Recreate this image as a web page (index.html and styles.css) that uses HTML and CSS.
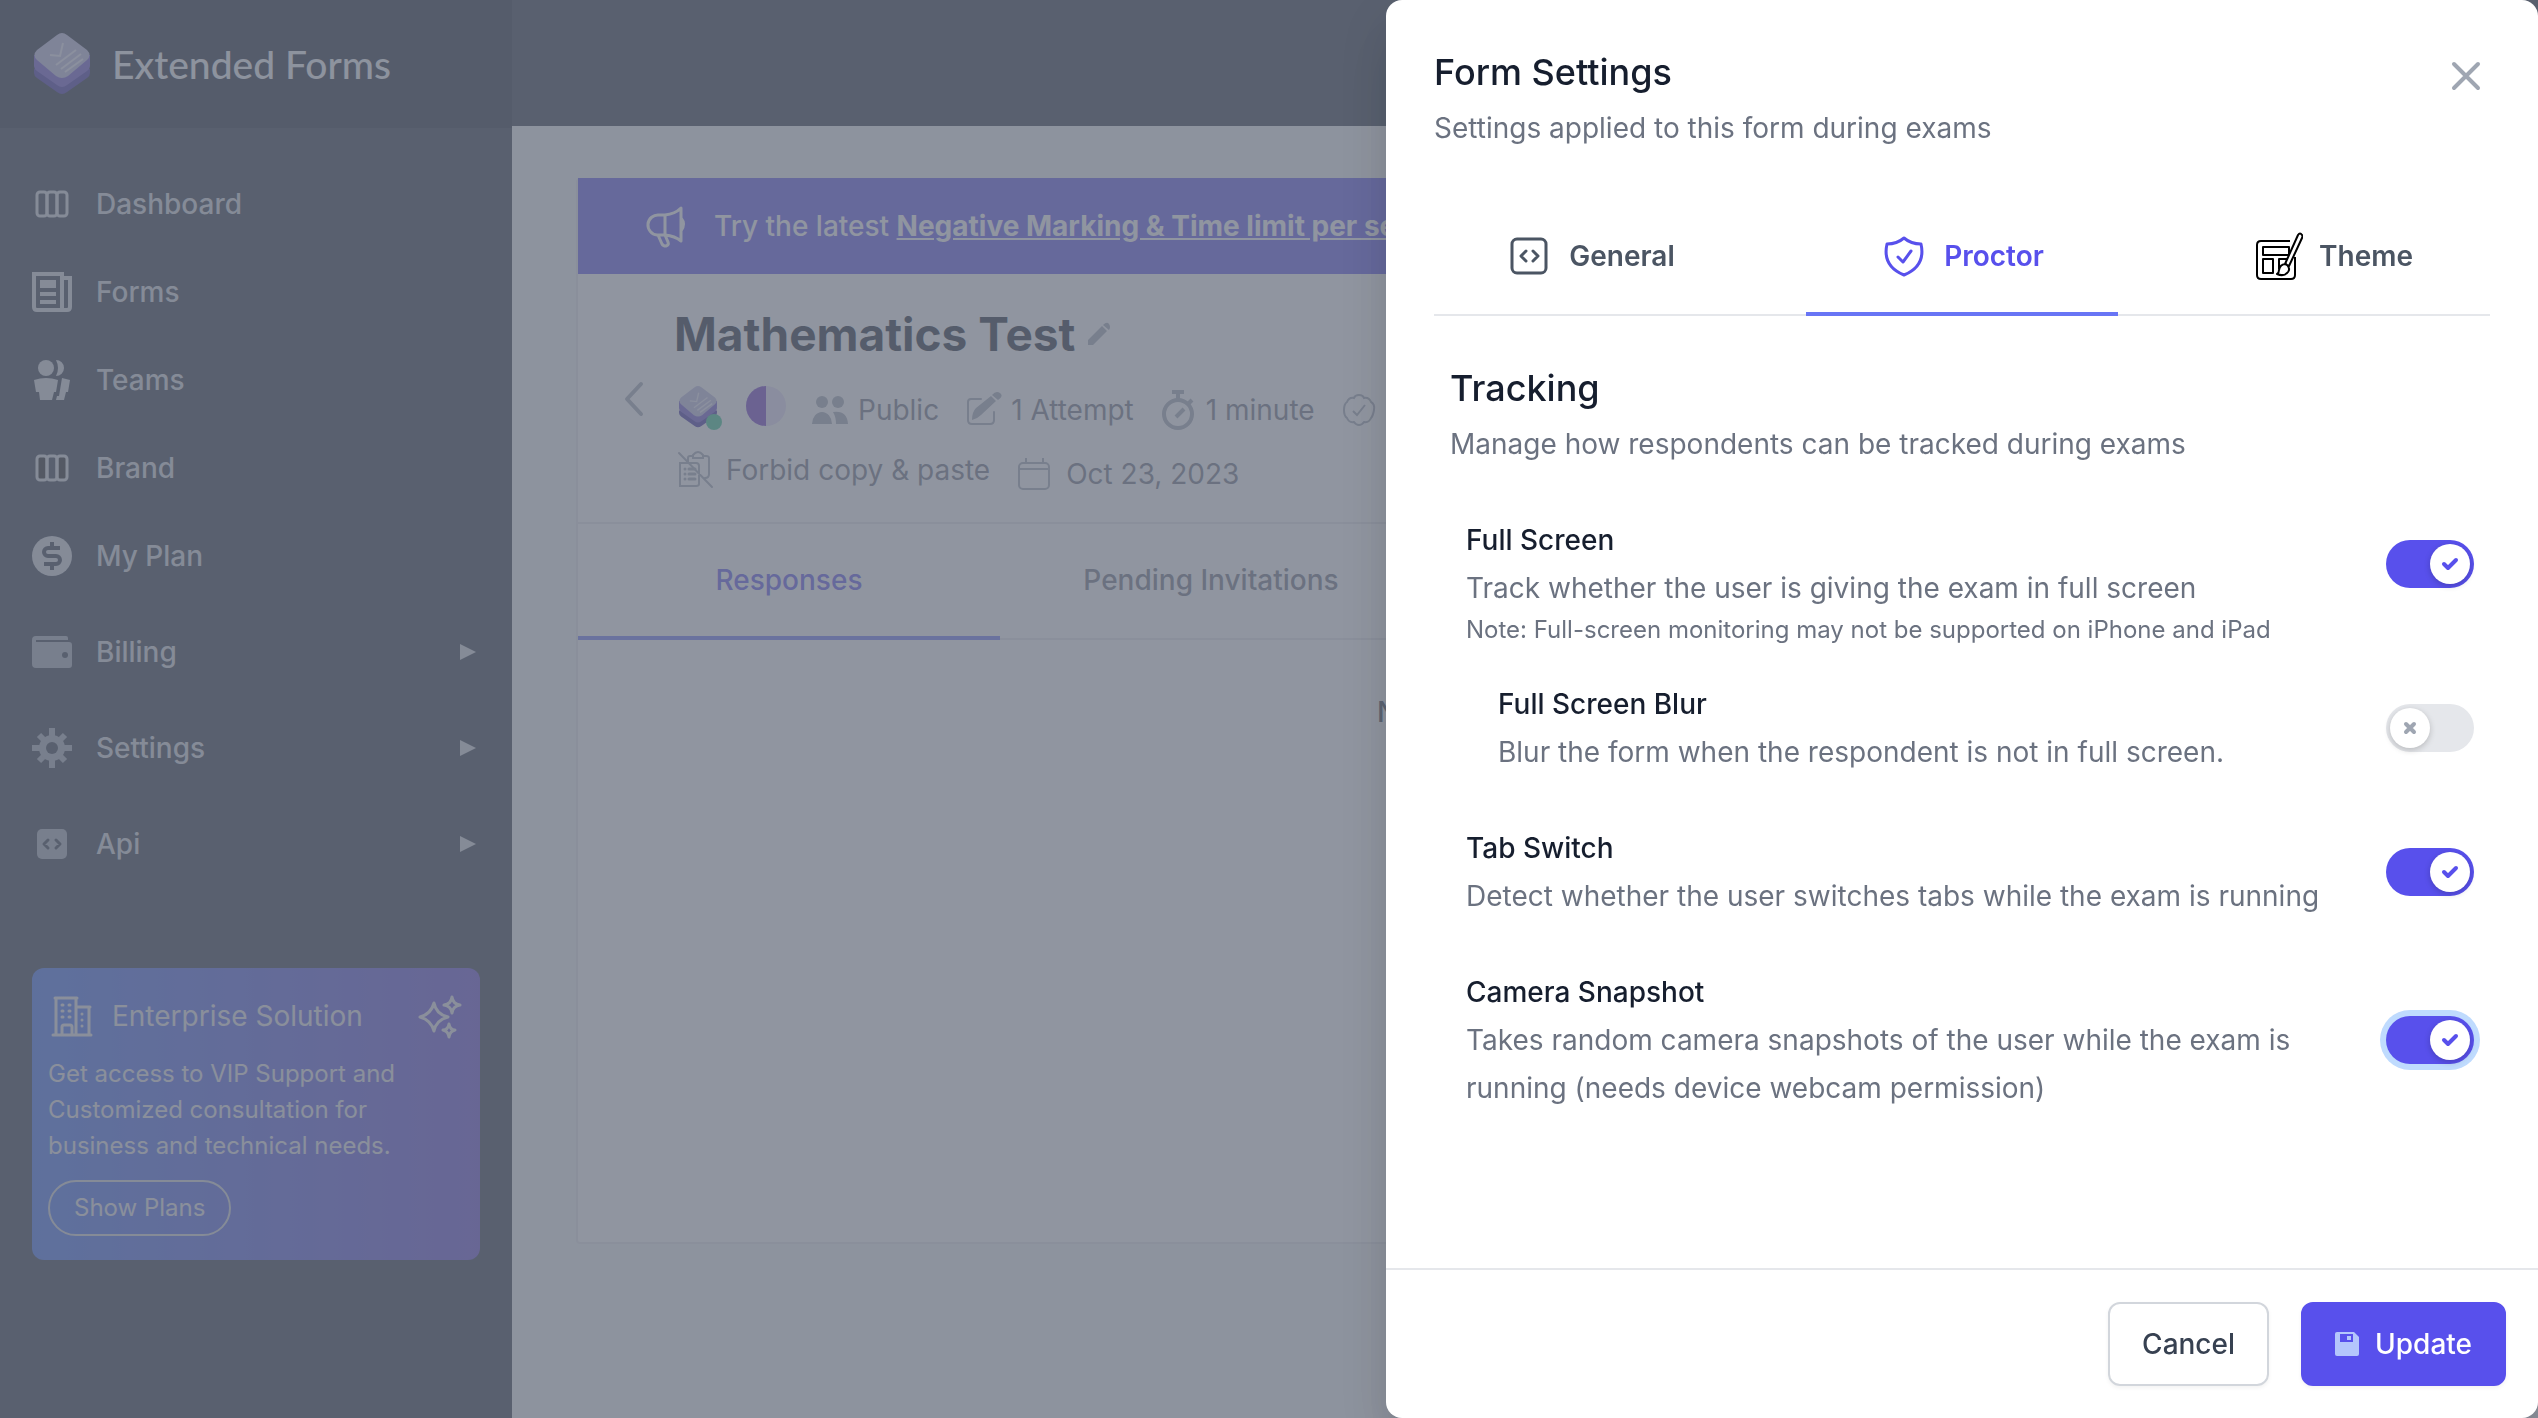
FILE: index.html
```html
<!DOCTYPE html>
<html lang="en">
<head>
<meta charset="utf-8">
<meta name="viewport" content="width=device-width, initial-scale=1">
<title>Extended Forms</title>
<link rel="stylesheet" href="styles.css">
</head>
<body>
<svg class="sprite" aria-hidden="true">
  <symbol id="logo" viewBox="0 0 56 62">
    <path fill="#3a28a0" d="M0 36v4q0 3 3 5l20 14q5 4 10 0l20-14q3-2 3-5v-4z"/>
    <path fill="#6852cc" d="M0 22v11q0 3 3 5l20 14q5 4 10 0l20-14q3-2 3-5V22z"/>
    <path fill="#bcbae0" d="M3 17 23 2q5-4 10 0l20 15q5 5 0 10L34 43q-6 4-12 0L3 27q-5-5 0-10z"/>
    <path fill="none" stroke="#e9e9f6" stroke-width="2" d="M16 22l10 1 3-13M22 32l20-15M27 36l20-15M31 39l18-13"/>
  </symbol>
  <symbol id="columns" viewBox="0 0 40 40">
    <rect x="5" y="8" width="10" height="24" rx="3"/><rect x="15" y="8" width="10" height="24" rx="3"/><rect x="25" y="8" width="10" height="24" rx="3"/>
  </symbol>
</svg>

<div class="app">
  <aside class="sidebar">
    <div class="brand">
      <svg class="brand-logo" aria-hidden="true"><use href="#logo"/></svg>
      <span class="brand-name">Extended Forms</span>
    </div>
    <nav>
      <ul class="nav">
        <li><a href="#" class="nav-link">
          <svg class="nav-icon line" viewBox="0 0 40 40"><use href="#columns"/></svg>Dashboard</a></li>
        <li><a href="#" class="nav-link">
          <svg class="nav-icon" viewBox="0 0 40 40"><path fill="none" stroke="currentColor" stroke-width="4" d="M2 2h28v36H5q-3 0-3-3zM30 6h8v29q0 3-3 3h-6"/><path fill="currentColor" d="M8 8h16v8H8zM8 20h16v4H8zM8 28h16v4H8z"/></svg>Forms</a></li>
        <li><a href="#" class="nav-link">
          <svg class="nav-icon" viewBox="0 0 40 40" fill="currentColor"><circle cx="14" cy="8" r="8"/><path d="M24 0a8 8 0 1 1 0 16q4-8 0-16zM2 20q12-4 24 0l-2 12h-2l-2 8H8l-1-8H4zM30 18l8 2-2 12h-2l-2 8h-8l1-4h2z"/></svg>Teams</a></li>
        <li><a href="#" class="nav-link">
          <svg class="nav-icon line" viewBox="0 0 40 40"><path fill="#111" stroke="none" d="M6 9h8v22H6zM26 9h8v22h-8z"/><use href="#columns"/></svg>Brand</a></li>
        <li><a href="#" class="nav-link">
          <svg class="nav-icon" viewBox="0 0 40 40"><circle cx="20" cy="20" r="20" fill="currentColor"/><path fill="none" stroke="#252f3f" stroke-width="4" d="M28 12H16a4 4 0 0 0 0 8h8a4 4 0 0 1 0 8H12M20 6v6M20 28v6"/></svg>My Plan</a></li>
      </ul>
      <ul class="nav groups">
        <li><button type="button" class="nav-link group">
          <svg class="nav-icon muted" viewBox="0 0 40 40"><path fill="currentColor" d="M4 4h30q2 0 2 2v2H4v2h33q3 0 3 3v20q0 3-3 3H4q-4 0-4-4V8q0-4 4-4z"/><circle cx="33" cy="23" r="3" fill="#252f3f"/></svg>Billing
          <svg class="caret" viewBox="0 0 16 16"><path fill="currentColor" d="M0 0l16 8-16 8z"/></svg></button></li>
        <li><button type="button" class="nav-link group">
          <svg class="nav-icon muted" viewBox="0 0 40 40"><path fill="none" stroke="currentColor" stroke-width="6" stroke-linejoin="round" d="M20 0v40M0 20h40M7 7l26 26M33 7 7 33"/><circle cx="20" cy="20" r="13" fill="currentColor"/><circle cx="20" cy="20" r="6" fill="#252f3f"/></svg>Settings
          <svg class="caret" viewBox="0 0 16 16"><path fill="currentColor" d="M0 0l16 8-16 8z"/></svg></button></li>
        <li><button type="button" class="nav-link group">
          <svg class="nav-icon muted" viewBox="0 0 40 40"><rect x="5" y="5" width="30" height="30" rx="5" fill="currentColor"/><path fill="none" stroke="#252f3f" stroke-width="3" stroke-linecap="round" stroke-linejoin="round" d="M16 16l-4 4 4 4M24 16l4 4-4 4"/></svg>Api
          <svg class="caret" viewBox="0 0 16 16"><path fill="currentColor" d="M0 0l16 8-16 8z"/></svg></button></li>
      </ul>
    </nav>
    <section class="promo">
      <div class="promo-head">
        <svg class="promo-icon" viewBox="0 0 48 48" fill="none" stroke="currentColor" stroke-width="3" stroke-linecap="round"><path d="M5 43h38M7 6h22M8 6v37M28 6v37M29 15h13M41 16v27M14 43v-8q0-2 2-2h6q2 0 2 2v8"/><path stroke-width="3" d="M14 13h1M21 13h1M14 19h1M21 19h1M14 25h1M21 25h1M34 22v0M34 28v0M34 34v0"/></svg>
        <h2>Enterprise Solution</h2>
        <svg class="promo-spark" viewBox="0 0 48 48" fill="none" stroke="currentColor" stroke-width="3" stroke-linejoin="round"><path d="M18 11q2 11 14 14-12 3-14 14-3-11-14-14 11-3 14-14zM36 5q1 7 8 8-7 1-8 8-1-7-8-8 7-1 8-8zM33 32q1 6 6 6-5 1-6 7-1-6-6-7 5 0 6-6z"/></svg>
      </div>
      <p>Get access to VIP Support and Customized consultation for business and technical needs.</p>
      <button type="button" class="promo-btn">Show Plans</button>
    </section>
  </aside>

  <div class="page">
    <header class="topbar"></header>
    <main class="main">
      <section class="card">
        <div class="banner">
          <svg class="banner-icon" viewBox="0 0 44 44" fill="none" stroke="currentColor" stroke-width="3" stroke-linejoin="round" stroke-linecap="round"><path d="M19 11h-6a10 10 0 0 0-2 20h8q10 1 16 6V4q-6 6-16 7v20M35 14q5 6 0 13M12 31l4 9q1 2 4 2 3-1 2-4l-3-7"/></svg>
          <p>Try the latest <a href="#">Negative Marking &amp; Time limit per section</a></p>
        </div>
        <div class="form-head">
          <a href="#" class="back" aria-label="Back"><svg viewBox="0 0 24 40" fill="none" stroke="currentColor" stroke-width="4" stroke-linecap="round" stroke-linejoin="round"><path d="M19 4 5 19l14 15"/></svg></a>
          <div class="form-info">
            <h1>Mathematics Test <svg class="pencil" viewBox="0 0 24 24" fill="currentColor"><path d="M1 23v-5L15 4l5 5L6 23zM16 3q4-4 6-1t0 6z"/></svg></h1>
            <div class="meta">
              <span class="avatar"><svg viewBox="0 0 56 62" aria-hidden="true"><use href="#logo"/></svg></span>
              <svg class="half" viewBox="0 0 40 40"><circle cx="20" cy="20" r="20" fill="#e6defa"/><path fill="#6c36c4" d="M20 0a20 20 0 0 0 0 40z"/></svg>
              <span class="meta-item"><svg class="meta-icon" viewBox="0 0 40 40" fill="currentColor"><circle cx="12" cy="12" r="6"/><circle cx="28" cy="12" r="6"/><path d="M2 34a10 12 0 0 1 20 0zM23 22q14-2 15 12H26q0-7-3-12z"/></svg>Public</span>
              <span class="meta-item"><svg class="meta-icon" viewBox="0 0 40 40"><path fill="none" stroke="currentColor" stroke-width="2" stroke-linecap="round" d="M18 9H8q-3 0-3 3v18q0 4 4 4h18q4 0 4-4v-8"/><path fill="currentColor" d="M9 30q0-8 4-12L28 6l5 5-15 14q-4 4-9 5zM29 5q4-5 8-2t-2 7z"/></svg>1 Attempt</span>
              <span class="meta-item"><svg class="meta-icon" viewBox="0 0 40 40" fill="none" stroke="currentColor" stroke-width="4"><circle cx="20" cy="24" r="14"/><path d="M14 2h12M20 2v8M30 14l4-4M18 27l8-8"/></svg>1 minute</span>
              <span class="meta-item"><svg class="meta-icon" viewBox="0 0 40 40" fill="none" stroke="currentColor" stroke-width="2"><path d="M20 5q4 0 5 3 5-1 7 4 4 2 3 8-1 6-3 8-2 5-7 4-2 3-5 3t-5-3q-5 1-7-4-3-2-3-8t3-8q2-5 7-4 1-3 5-3z"/><path d="M14 21l4 4 8-10"/></svg></span>
            </div>
            <div class="meta second">
              <span class="meta-item short"><svg class="meta-icon" viewBox="0 0 40 40" fill="none" stroke="currentColor" stroke-width="2" stroke-linecap="round"><path d="M6 13h16q3 0 3 3v18q0 2-3 2H6zM14 12V8q0-2 2-2h3M29 6h3q3 0 3 2v16q0 4-4 4M19 5q5-6 10 0v3H19zM5 3l33 34"/><path d="M11 19h0M11 24h0M11 29h0M15 19h6M15 24h6M15 29h6" stroke-width="3"/></svg>Forbid copy &amp; paste</span>
              <span class="meta-item"><svg class="meta-icon" viewBox="0 0 40 40" fill="none" stroke="currentColor" stroke-width="2"><rect x="5" y="9" width="30" height="26" rx="4"/><path d="M5 15h30M12 4v5M29 4v5"/></svg>Oct 23, 2023</span>
            </div>
          </div>
        </div>
        <div class="tabs">
          <a href="#" class="tab active">Responses</a>
          <a href="#" class="tab">Pending Invitations</a>
        </div>
        <p class="empty">No responses received</p>
      </section>
    </main>
  </div>
</div>

<div class="overlay"></div>

<div class="drawer" role="dialog" aria-labelledby="drawer-title">
  <div class="drawer-body">
    <header class="drawer-head">
      <div>
        <h2 id="drawer-title">Form Settings</h2>
        <p>Settings applied to this form during exams</p>
      </div>
      <button type="button" class="close" aria-label="Close"><svg viewBox="0 0 48 48" fill="none" stroke="currentColor" stroke-width="4" stroke-linecap="round"><path d="M12 12l24 24M36 12 12 36"/></svg></button>
    </header>
    <div class="dtabs" role="tablist">
      <button type="button" class="dtab" role="tab"><svg viewBox="0 0 48 48" fill="none" stroke="currentColor" stroke-width="3" stroke-linecap="round" stroke-linejoin="round"><rect x="7" y="7" width="34" height="34" rx="5"/><path d="M21 19l-5 5 5 5M28 19l5 5-5 5"/></svg>General</button>
      <button type="button" class="dtab active" role="tab" aria-selected="true"><svg viewBox="0 0 48 48" fill="none" stroke="currentColor" stroke-width="3" stroke-linecap="round" stroke-linejoin="round"><path d="M24 6q7 6 17 6 5 22-17 31Q2 34 7 12q10 0 17-6z"/><path d="M18 25l5 5 8-11"/></svg>Proctor</button>
      <button type="button" class="dtab" role="tab"><svg viewBox="0 0 48 48" fill="none" stroke="#000" stroke-width="2" stroke-linejoin="round"><path d="M35 9H6q-4 0-4 4v30q0 4 4 4h30q4 0 4-4V25M8 15h26v8H8zM8 27h10v14H8zM32 27h-8v10"/><path fill="#fff" d="M30 32 43 3q2-3 4 0 1 1 0 3L34 34zM22 42q2-1 2-4 1-6 7-6 5 4 2 8-4 5-11 2z"/></svg>Theme</button>
    </div>
    <section class="settings">
      <h3>Tracking</h3>
      <p class="desc">Manage how respondents can be tracked during exams</p>
      <div class="setting">
        <div class="setting-row">
          <label for="full-screen"><strong>Full Screen</strong><span class="desc">Track whether the user is giving the exam in full screen</span></label>
          <input type="checkbox" class="switch" id="full-screen" checked>
        </div>
        <p class="note">Note: Full-screen monitoring may not be supported on iPhone and iPad</p>
        <div class="setting-row nested">
          <label for="blur"><strong>Full Screen Blur</strong><span class="desc">Blur the form when the respondent is not in full screen.</span></label>
          <input type="checkbox" class="switch" id="blur">
        </div>
      </div>
      <div class="setting setting-row">
        <label for="tab-switch"><strong>Tab Switch</strong><span class="desc">Detect whether the user switches tabs while the exam is running</span></label>
        <input type="checkbox" class="switch" id="tab-switch" checked>
      </div>
      <div class="setting setting-row">
        <label for="camera"><strong>Camera Snapshot</strong><span class="desc">Takes random camera snapshots of the user while the exam is running (needs device webcam permission)</span></label>
        <input type="checkbox" class="switch focused" id="camera" checked>
      </div>
    </section>
  </div>
  <footer class="drawer-foot">
    <button type="button" class="btn">Cancel</button>
    <button type="button" class="btn primary"><svg viewBox="0 0 24 24"><path fill="#b4c6fc" d="M2 0h17l5 5v17q0 2-2 2H2q-2 0-2-2V2q0-2 2-2z"/><path fill="#5850ec" d="M5 2h13v8H5z"/><path fill="#b4c6fc" d="M12 4h4v4h-4z"/></svg>Update</button>
  </footer>
</div>
</body>
</html>
```
FILE: styles.css
```css
* { box-sizing: border-box; }

body {
  margin: 0;
  font: 400 28px/48px Inter, "Liberation Sans", sans-serif;
  color: #6b7280;
  background: #f4f5f7;
  overflow: hidden;
}

h1, h2, h3, p, ul { margin: 0; padding: 0; }
ul { list-style: none; }
a { color: inherit; text-decoration: none; }
button { font: inherit; color: inherit; background: none; border: 0; padding: 0; cursor: pointer; }
svg { display: block; flex: none; }
.sprite { position: absolute; width: 0; height: 0; }

.app { display: grid; grid-template-columns: 512px minmax(0, 1fr); min-height: 100vh; }

/* Sidebar */
.sidebar { background: #252f3f; color: #d2d6dc; }
.brand { display: flex; align-items: center; gap: 22px; height: 128px; padding: 0 34px; background: #161e2e; }
.brand-logo { width: 56px; height: 62px; }
.brand-name { font: 500 39px/48px Lato, sans-serif; color: #f4f5f7; }
.nav { padding-top: 32px; }
.nav.groups { padding-top: 4px; }
.nav-link { display: flex; align-items: center; gap: 24px; width: 100%; height: 88px; padding: 0 36px 0 32px; font-weight: 500; text-align: left; }
.nav-link.group { height: 96px; }
.nav-icon { width: 40px; height: 40px; }
.nav-icon.line { fill: none; stroke: currentColor; stroke-width: 3; }
.nav-icon.muted { color: #9fa6b2; }
.caret { width: 16px; height: 16px; margin-left: auto; }

.promo { margin: 76px 32px 0; padding: 24px 16px; border-radius: 12px; background: linear-gradient(90deg, #3b6ef0, #6046d0); color: #e5e7eb; font-size: 24px; line-height: 36px; }
.promo-head { display: flex; align-items: center; gap: 16px; margin-bottom: 16px; }
.promo-head h2 { font-weight: 400; font-size: 28px; line-height: 48px; }
.promo-icon, .promo-spark { width: 48px; height: 48px; }
.promo-spark { margin-left: auto; }
.promo-btn { height: 56px; margin-top: 16px; padding: 0 24px; border: 2px solid #d2d6dc; border-radius: 28px; }

/* Form page */
.topbar { height: 126px; background: #252f3f; }
.main { padding: 52px 64px; }
.card { min-height: 1066px; border: 2px solid #e5e7eb; border-top: 0; border-radius: 4px; background: #fff; }
.banner { display: flex; align-items: center; gap: 24px; height: 96px; padding: 0 68px; background: #5850ec; color: #fff; font-weight: 500; white-space: nowrap; }
.banner-icon { width: 44px; height: 44px; }
.banner a { font-weight: 700; text-decoration: underline; }
.form-head { display: flex; align-items: center; gap: 28px; padding: 28px 44px 24px; border-bottom: 2px solid #e5e7eb; }
.back svg { width: 24px; height: 40px; color: #9fa6b2; }
.form-info h1 { display: flex; align-items: center; gap: 12px; font-size: 46px; line-height: 64px; font-weight: 700; color: #161e2e; }
.pencil { width: 24px; height: 24px; color: #9fa6b2; }
.meta { display: flex; gap: 24px; margin-top: 20px; }
.meta.second { margin-top: 16px; }
.meta-item { display: flex; align-items: center; gap: 8px; height: 48px; }
.meta-item.short { height: 40px; }
.meta.second .meta-item { gap: 12px; }
.meta-icon { width: 40px; height: 40px; color: #9fa6b2; }
.avatar { position: relative; width: 48px; padding: 0 4px; }
.avatar svg { width: 40px; height: 42px; }
.avatar::after { content: ""; position: absolute; right: 0; bottom: 4px; width: 16px; height: 16px; border-radius: 50%; background: #31c48d; }
.half { width: 40px; height: 40px; }

.tabs { display: flex; border-bottom: 2px solid #e5e7eb; }
.tab { flex: 0 0 422px; height: 116px; margin-bottom: -2px; border-bottom: 4px solid transparent; line-height: 112px; text-align: center; font-weight: 500; }
.tab.active { color: #5850ec; border-color: #6875f5; }
.empty { padding: 48px 36px 48px 48px; text-align: center; font-weight: 500; color: #374151; }

.overlay { position: fixed; inset: 0; background: rgba(107, 114, 128, .75); }

/* Settings drawer */
.drawer { position: fixed; top: 0; right: 0; bottom: 0; display: flex; flex-direction: column; width: 1152px; max-width: 100%; border-radius: 16px; background: #fff; box-shadow: 0 40px 50px -10px rgba(0, 0, 0, .1), 0 20px 50px rgba(0, 0, 0, .1); }
.drawer-body { flex: 1; padding: 48px; overflow: auto; }
.drawer-head { display: flex; justify-content: space-between; align-items: flex-start; }
.drawer h2, .drawer h3 { margin-bottom: 8px; font-size: 36px; line-height: 48px; font-weight: 500; color: #161e2e; }
.close { margin-top: 4px; color: #9fa6b2; }
.close svg { width: 48px; height: 48px; }
.dtabs { display: flex; justify-content: space-between; margin-top: 48px; border-bottom: 2px solid #e5e7eb; }
.dtab { display: flex; flex: 0 0 312px; align-items: center; justify-content: center; gap: 16px; height: 116px; margin-bottom: -2px; border-bottom: 4px solid transparent; font-weight: 600; color: #4b5563; }
.dtab svg { width: 48px; height: 48px; }
.dtab.active { color: #5850ec; border-color: #6875f5; }

.settings { padding: 48px 16px 0; }
.setting { padding: 0 0 0 16px; margin-top: 48px; }
.setting-row { display: flex; align-items: center; justify-content: space-between; gap: 48px; }
.setting-row label { display: block; }
.setting-row strong { display: block; font-weight: 500; color: #161e2e; }
.setting-row.nested { margin-top: 32px; padding-left: 32px; }
.note { font-size: 24px; line-height: 36px; }

.switch { appearance: none; flex: none; width: 88px; height: 48px; margin: 0; padding: 4px; border-radius: 24px; background: #e5e7eb; cursor: pointer; }
.switch::before { content: ""; display: block; width: 40px; height: 40px; border-radius: 50%; box-shadow: 0 2px 6px rgba(0, 0, 0, .2); background: #fff url("data:image/svg+xml,%3Csvg xmlns='http://www.w3.org/2000/svg' viewBox='0 0 40 40'%3E%3Cpath fill='none' stroke='%239fa6b2' stroke-width='4' stroke-linecap='round' d='M16 16l8 8M24 16l-8 8'/%3E%3C/svg%3E"); }
.switch:checked { background: #5850ec; }
.switch:checked::before { margin-left: 40px; background-image: url("data:image/svg+xml,%3Csvg xmlns='http://www.w3.org/2000/svg' viewBox='0 0 40 40'%3E%3Cpath fill='none' stroke='%235850ec' stroke-width='4' stroke-linecap='round' stroke-linejoin='round' d='M14 20l4 4 8-8'/%3E%3C/svg%3E"); }
.switch.focused { box-shadow: 0 0 0 6px #bfdbfe; }

.drawer-foot { display: flex; justify-content: flex-end; gap: 32px; padding: 32px; border-top: 2px solid #e5e7eb; }
.btn { display: flex; align-items: center; gap: 16px; height: 84px; padding: 0 32px; border: 2px solid #d2d6dc; border-radius: 12px; box-shadow: 0 2px 4px rgba(0, 0, 0, .05); font-weight: 500; color: #374151; }
.btn.primary { border-color: #5850ec; background: #5850ec; color: #fff; }
.btn svg { width: 24px; height: 24px; }
```
